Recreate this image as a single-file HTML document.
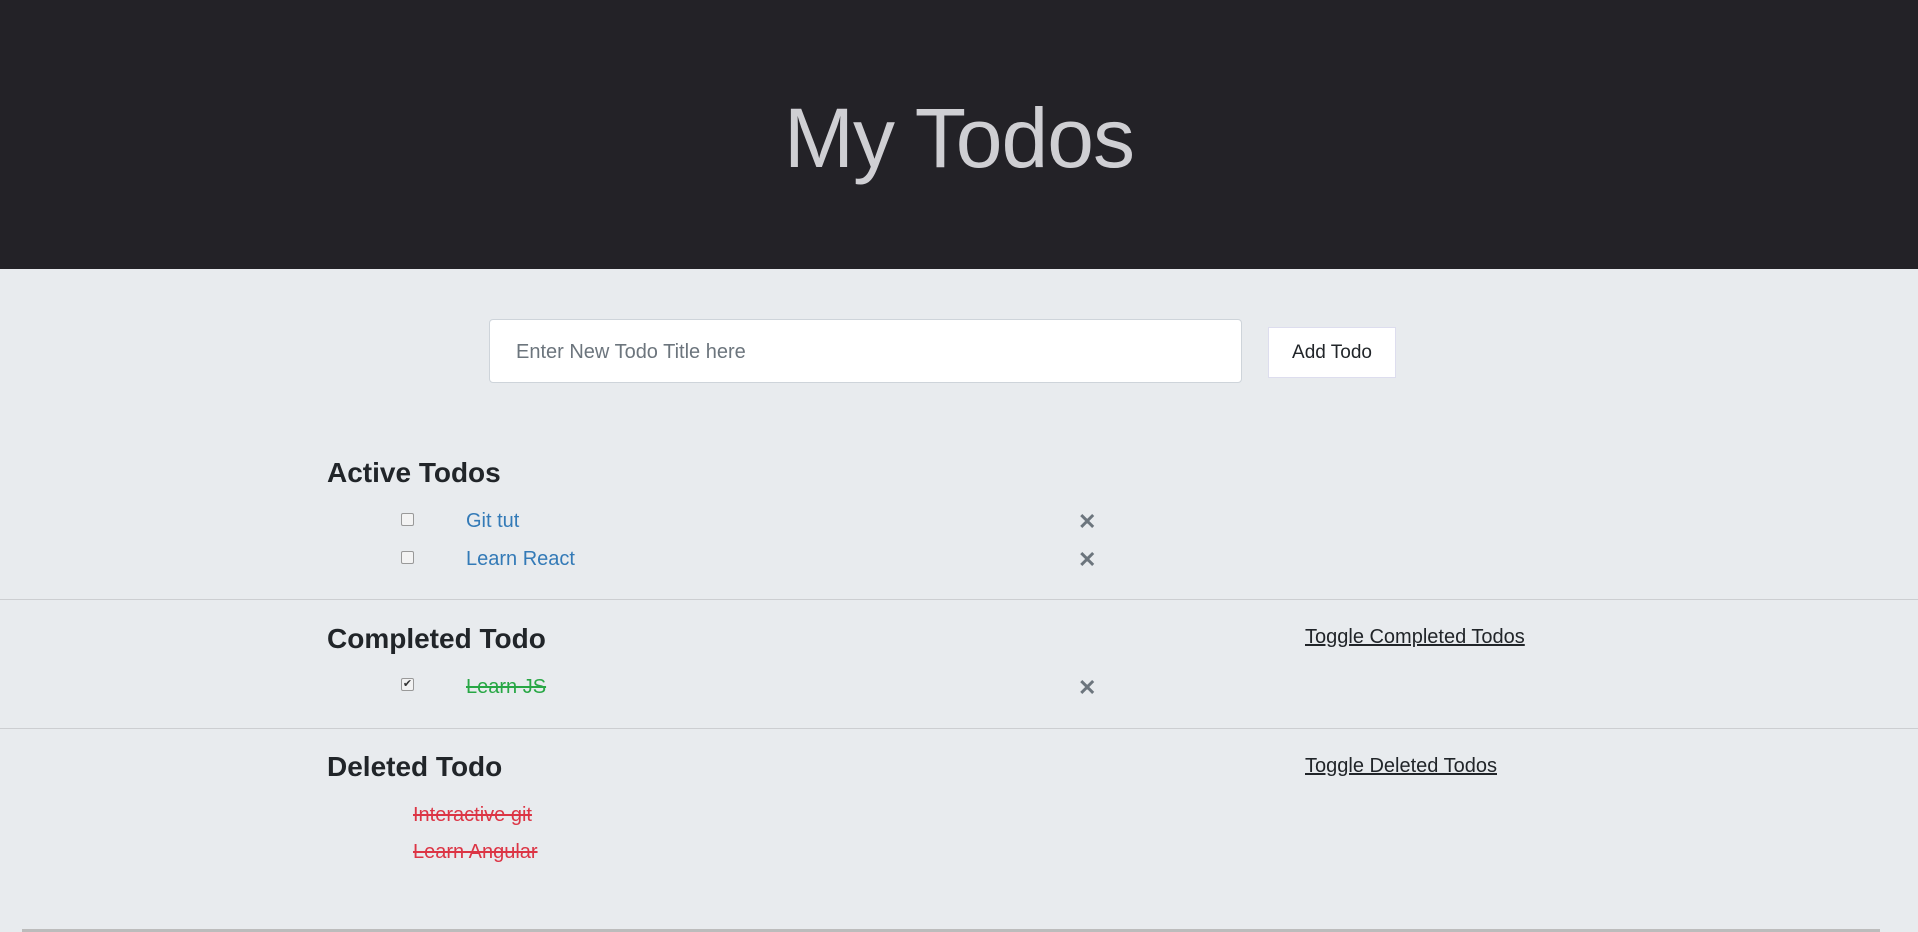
<!DOCTYPE html>
<html><head><meta charset="utf-8"><style>
*{margin:0;padding:0;box-sizing:border-box}
html,body{width:1918px;height:932px;overflow:hidden}
body{background:#e8ebee;font-family:"Liberation Sans",sans-serif;color:#212529;position:relative}
.hdr{position:absolute;left:0;top:0;width:1918px;height:269px;background:#232227}
.hdr h1{position:absolute;left:0;width:1918px;top:96px;text-align:center;font-weight:normal;font-size:84px;color:#cfcfd3;letter-spacing:-1px;line-height:1}
.a{position:absolute;white-space:nowrap;line-height:1}
.inp{position:absolute;left:489px;top:319px;width:753px;height:64px;background:#fff;border:1px solid #ced4da;border-radius:4px}
.inp span{position:absolute;left:26px;top:21px;font-size:20px;color:#6c757d}
.btn{position:absolute;left:1268px;top:327px;width:128px;height:51px;background:#fff;border:1px solid #dde;font-size:19px;text-align:center;line-height:49px;color:#212529}
h2{position:absolute;font-size:28px;font-weight:bold;line-height:1;color:#212529}
.cb{position:absolute;width:13px;height:13px;border:1px solid #999;border-radius:2px;background:#f3f3f3}
.blue{color:#337ab7;font-size:20px}
.x{color:#6c757d;font-size:22px;font-weight:bold}
.tg{font-size:20px;text-decoration:underline;color:#212529}
hr{position:absolute;left:0;width:1918px;border:0;border-top:1px solid #ccced1}
</style></head><body>
<div class="hdr"><h1>My Todos</h1></div>
<div class="inp"><span>Enter New Todo Title here</span></div>
<div class="btn">Add Todo</div>

<h2 style="left:327px;top:459px">Active Todos</h2>
<div class="cb" style="left:401px;top:513px"></div>
<div class="a blue" style="left:466px;top:511px">Git tut</div>
<div class="a x" style="left:1078px;top:511px">✕</div>
<div class="cb" style="left:401px;top:551px"></div>
<div class="a blue" style="left:466px;top:549px">Learn React</div>
<div class="a x" style="left:1078px;top:549px">✕</div>

<hr style="top:599px">
<h2 style="left:327px;top:625px">Completed Todo</h2>
<div class="a tg" style="left:1305px;top:627px">Toggle Completed Todos</div>
<div class="cb" style="left:401px;top:678px;font-size:11px;line-height:11px;text-align:center;color:#333">✔</div>
<div class="a" style="left:466px;top:677px;font-size:20px;color:#28a745;text-decoration:line-through">Learn JS</div>
<div class="a x" style="left:1078px;top:677px">✕</div>

<hr style="top:728px">
<h2 style="left:327px;top:753px">Deleted Todo</h2>
<div class="a tg" style="left:1305px;top:756px">Toggle Deleted Todos</div>
<div class="a" style="left:413px;top:805px;font-size:20px;color:#dc3545;text-decoration:line-through">Interactive git</div>
<div class="a" style="left:413px;top:842px;font-size:20px;color:#dc3545;text-decoration:line-through">Learn Angular</div>

<div style="position:absolute;left:22px;top:929px;width:1858px;height:3px;background:#bcbcbc"></div>
</body></html>
